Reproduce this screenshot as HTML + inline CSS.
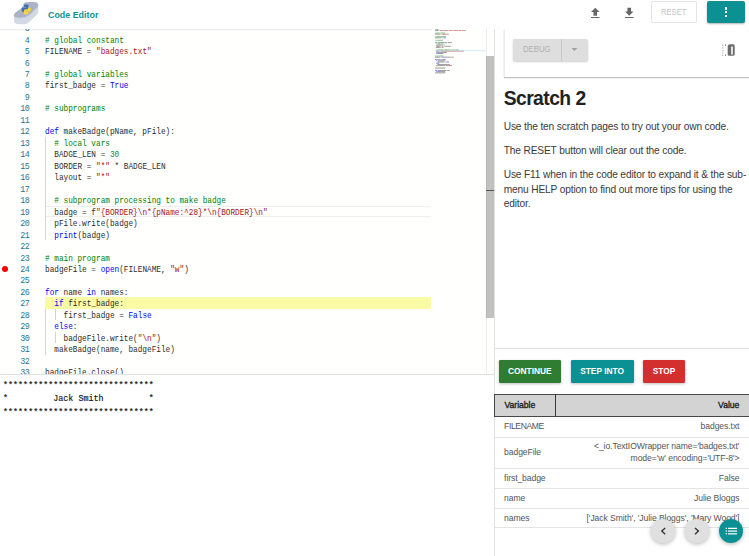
<!DOCTYPE html>
<html><head><meta charset="utf-8"><style>
*{margin:0;padding:0;box-sizing:border-box}
html,body{width:749px;height:556px;overflow:hidden;background:#fff;font-family:"Liberation Sans",sans-serif}
.abs{position:absolute}
#editor{position:absolute;left:0;top:0;width:494px;height:374px;background:#fffffe;overflow:hidden}
.ln{position:absolute;left:-0.6px;width:30px;text-align:right;font-family:"Liberation Mono",monospace;font-size:8.4px;line-height:11.47px;color:#237893;white-space:pre;letter-spacing:-0.4px;margin-top:2px}
.cl{position:absolute;left:45.4px;font-family:"Liberation Mono",monospace;font-size:8.4px;line-height:11.47px;white-space:pre;transform:scaleX(0.9226);transform-origin:0 0;margin-top:2px}
.ig{position:absolute;width:0.6px;background:#d3d3d3}
#header{position:absolute;left:0;top:0;width:749px;height:28.8px;background:#fff;z-index:5}
.btn{position:absolute;font-family:"Liberation Sans",sans-serif;font-weight:bold;color:#fff;text-align:center;border-radius:1.2px;box-shadow:0 1px 3px rgba(0,0,0,0.25)}
p.t{position:absolute;left:503.7px;white-space:nowrap;font-size:10.2px;letter-spacing:-0.15px;line-height:14.45px;color:#3a3a3a}
.hd{position:absolute;font-size:8.6px;font-weight:normal;color:#222;-webkit-text-stroke:0.35px #222;white-space:nowrap;line-height:10px}
.rl{position:absolute;left:494.6px;width:254.4px;height:0.7px;background:#e4e4e4}
.vt{position:absolute;left:504.1px;letter-spacing:-0.1px;font-size:8.6px;color:#555;white-space:nowrap;line-height:10px}
.vv{position:absolute;right:9.6px;letter-spacing:-0.08px;text-align:right;font-size:8.6px;color:#555;white-space:nowrap;line-height:10px}
.row{position:absolute;left:494px;width:255px;border-bottom:1px solid #e0e0e0;font-size:9.2px;color:#444}
.fab{position:absolute;border-radius:50%;box-shadow:0 1px 4px rgba(0,0,0,0.3)}
</style></head><body>
<div id="editor">
  <div class="abs" style="left:45px;top:297.41px;width:386px;height:11.47px;background:#fcfba5"></div>
  <div class="abs" style="left:45px;top:205.65px;width:386px;height:11.47px;border-top:1.2px solid #eeeeee;border-bottom:1.2px solid #eeeeee"></div>
  <div class="ig" style="left:45.40px;top:136.83px;height:103.23px"></div><div class="ig" style="left:45.40px;top:308.88px;height:45.88px"></div><div class="ig" style="left:54.70px;top:308.88px;height:11.47px"></div><div class="ig" style="left:54.70px;top:331.82px;height:11.47px"></div>
  <div class="ln" style="top:22.13px">3</div><div class="cl" style="top:22.13px"></div><div class="ln" style="top:33.60px">4</div><div class="cl" style="top:33.60px"><span style="color:#008000"># global constant</span></div><div class="ln" style="top:45.07px">5</div><div class="cl" style="top:45.07px"><span style="color:#2c2c2c">FILENAME = </span><span style="color:#a31515">&quot;badges.txt&quot;</span></div><div class="ln" style="top:56.54px">6</div><div class="cl" style="top:56.54px"></div><div class="ln" style="top:68.01px">7</div><div class="cl" style="top:68.01px"><span style="color:#008000"># global variables</span></div><div class="ln" style="top:79.48px">8</div><div class="cl" style="top:79.48px"><span style="color:#2c2c2c">first_badge = </span><span style="color:#0000ff">True</span></div><div class="ln" style="top:90.95px">9</div><div class="cl" style="top:90.95px"></div><div class="ln" style="top:102.42px">10</div><div class="cl" style="top:102.42px"><span style="color:#008000"># subprograms</span></div><div class="ln" style="top:113.89px">11</div><div class="cl" style="top:113.89px"></div><div class="ln" style="top:125.36px">12</div><div class="cl" style="top:125.36px"><span style="color:#0000ff">def</span><span style="color:#2c2c2c"> makeBadge(pName, pFile):</span></div><div class="ln" style="top:136.83px">13</div><div class="cl" style="top:136.83px"><span style="color:#008000">  # local vars</span></div><div class="ln" style="top:148.30px">14</div><div class="cl" style="top:148.30px"><span style="color:#2c2c2c">  BADGE_LEN = </span><span style="color:#098658">30</span></div><div class="ln" style="top:159.77px">15</div><div class="cl" style="top:159.77px"><span style="color:#2c2c2c">  BORDER = </span><span style="color:#a31515">&quot;*&quot;</span><span style="color:#2c2c2c"> * BADGE_LEN</span></div><div class="ln" style="top:171.24px">16</div><div class="cl" style="top:171.24px"><span style="color:#2c2c2c">  layout = </span><span style="color:#a31515">&quot;*&quot;</span></div><div class="ln" style="top:182.71px">17</div><div class="cl" style="top:182.71px"></div><div class="ln" style="top:194.18px">18</div><div class="cl" style="top:194.18px"><span style="color:#008000">  # subprogram processing to make badge</span></div><div class="ln" style="top:205.65px">19</div><div class="cl" style="top:205.65px"><span style="color:#2c2c2c">  badge = f</span><span style="color:#a31515">&quot;{BORDER}\n*{pName:^28}*\n{BORDER}\n&quot;</span></div><div class="ln" style="top:217.12px">20</div><div class="cl" style="top:217.12px"><span style="color:#2c2c2c">  pFile.write(badge)</span></div><div class="ln" style="top:228.59px">21</div><div class="cl" style="top:228.59px"><span style="color:#2c2c2c">  </span><span style="color:#0000ff">print</span><span style="color:#2c2c2c">(badge)</span></div><div class="ln" style="top:240.06px">22</div><div class="cl" style="top:240.06px"></div><div class="ln" style="top:251.53px">23</div><div class="cl" style="top:251.53px"><span style="color:#008000"># main program</span></div><div class="ln" style="top:263.00px">24</div><div class="cl" style="top:263.00px"><span style="color:#2c2c2c">badgeFile = </span><span style="color:#0000ff">open</span><span style="color:#2c2c2c">(FILENAME, </span><span style="color:#a31515">&quot;w&quot;</span><span style="color:#2c2c2c">)</span></div><div class="ln" style="top:274.47px">25</div><div class="cl" style="top:274.47px"></div><div class="ln" style="top:285.94px">26</div><div class="cl" style="top:285.94px"><span style="color:#0000ff">for</span><span style="color:#2c2c2c"> name </span><span style="color:#0000ff">in</span><span style="color:#2c2c2c"> names:</span></div><div class="ln" style="top:297.41px">27</div><div class="cl" style="top:297.41px"><span style="color:#2c2c2c">  </span><span style="color:#0000ff">if</span><span style="color:#2c2c2c"> first_badge:</span></div><div class="ln" style="top:308.88px">28</div><div class="cl" style="top:308.88px"><span style="color:#2c2c2c">    first_badge = </span><span style="color:#0000ff">False</span></div><div class="ln" style="top:320.35px">29</div><div class="cl" style="top:320.35px"><span style="color:#2c2c2c">  </span><span style="color:#0000ff">else</span><span style="color:#2c2c2c">:</span></div><div class="ln" style="top:331.82px">30</div><div class="cl" style="top:331.82px"><span style="color:#2c2c2c">    badgeFile.write(</span><span style="color:#a31515">&quot;\n&quot;</span><span style="color:#2c2c2c">)</span></div><div class="ln" style="top:343.29px">31</div><div class="cl" style="top:343.29px"><span style="color:#2c2c2c">  makeBadge(name, badgeFile)</span></div><div class="ln" style="top:354.76px">32</div><div class="cl" style="top:354.76px"></div><div class="ln" style="top:366.23px">33</div><div class="cl" style="top:366.23px"><span style="color:#2c2c2c">badgeFile.close()</span></div><div class="ln" style="top:377.70px">34</div><div class="cl" style="top:377.70px"></div>
  <div class="abs" style="left:2px;top:265.54px;width:6.4px;height:6.4px;border-radius:50%;background:#ff0000"></div>
  <svg class="abs" style="left:0;top:0" width="494" height="374"><rect x="435.00" y="28.95" width="0.60" height="0.85" fill="#008000" fill-opacity="0.6"/><rect x="436.21" y="28.95" width="0.60" height="0.85" fill="#008000" fill-opacity="0.6"/><rect x="436.81" y="28.95" width="0.60" height="0.85" fill="#008000" fill-opacity="0.6"/><rect x="437.42" y="28.95" width="0.60" height="0.85" fill="#008000" fill-opacity="0.6"/><rect x="438.02" y="28.95" width="0.60" height="0.85" fill="#008000" fill-opacity="0.6"/><rect x="435.00" y="30.16" width="0.60" height="0.85" fill="#2c2c2c" fill-opacity="0.6"/><rect x="435.60" y="30.16" width="0.60" height="0.85" fill="#2c2c2c" fill-opacity="0.6"/><rect x="436.21" y="30.16" width="0.60" height="0.85" fill="#2c2c2c" fill-opacity="0.6"/><rect x="436.81" y="30.16" width="0.60" height="0.85" fill="#2c2c2c" fill-opacity="0.6"/><rect x="437.42" y="30.16" width="0.60" height="0.85" fill="#2c2c2c" fill-opacity="0.6"/><rect x="438.62" y="30.16" width="0.60" height="0.85" fill="#2c2c2c" fill-opacity="0.6"/><rect x="439.83" y="30.16" width="0.60" height="0.85" fill="#a31515" fill-opacity="0.6"/><rect x="440.44" y="30.16" width="0.60" height="0.85" fill="#a31515" fill-opacity="0.6"/><rect x="441.04" y="30.16" width="0.60" height="0.85" fill="#a31515" fill-opacity="0.6"/><rect x="441.64" y="30.16" width="0.60" height="0.85" fill="#a31515" fill-opacity="0.6"/><rect x="442.25" y="30.16" width="0.60" height="0.85" fill="#a31515" fill-opacity="0.6"/><rect x="442.85" y="30.16" width="0.60" height="0.85" fill="#a31515" fill-opacity="0.6"/><rect x="444.06" y="30.16" width="0.60" height="0.85" fill="#a31515" fill-opacity="0.6"/><rect x="444.66" y="30.16" width="0.60" height="0.85" fill="#a31515" fill-opacity="0.6"/><rect x="445.27" y="30.16" width="0.60" height="0.85" fill="#a31515" fill-opacity="0.6"/><rect x="445.87" y="30.16" width="0.60" height="0.85" fill="#a31515" fill-opacity="0.6"/><rect x="446.48" y="30.16" width="0.60" height="0.85" fill="#a31515" fill-opacity="0.6"/><rect x="447.08" y="30.16" width="0.60" height="0.85" fill="#a31515" fill-opacity="0.6"/><rect x="447.68" y="30.16" width="0.60" height="0.85" fill="#a31515" fill-opacity="0.6"/><rect x="448.89" y="30.16" width="0.60" height="0.85" fill="#a31515" fill-opacity="0.6"/><rect x="449.50" y="30.16" width="0.60" height="0.85" fill="#a31515" fill-opacity="0.6"/><rect x="450.10" y="30.16" width="0.60" height="0.85" fill="#a31515" fill-opacity="0.6"/><rect x="450.70" y="30.16" width="0.60" height="0.85" fill="#a31515" fill-opacity="0.6"/><rect x="451.31" y="30.16" width="0.60" height="0.85" fill="#a31515" fill-opacity="0.6"/><rect x="451.91" y="30.16" width="0.60" height="0.85" fill="#a31515" fill-opacity="0.6"/><rect x="453.12" y="30.16" width="0.60" height="0.85" fill="#a31515" fill-opacity="0.6"/><rect x="453.72" y="30.16" width="0.60" height="0.85" fill="#a31515" fill-opacity="0.6"/><rect x="454.33" y="30.16" width="0.60" height="0.85" fill="#a31515" fill-opacity="0.6"/><rect x="454.93" y="30.16" width="0.60" height="0.85" fill="#a31515" fill-opacity="0.6"/><rect x="455.54" y="30.16" width="0.60" height="0.85" fill="#a31515" fill-opacity="0.6"/><rect x="456.14" y="30.16" width="0.60" height="0.85" fill="#a31515" fill-opacity="0.6"/><rect x="456.74" y="30.16" width="0.60" height="0.85" fill="#a31515" fill-opacity="0.6"/><rect x="457.35" y="30.16" width="0.60" height="0.85" fill="#a31515" fill-opacity="0.6"/><rect x="458.56" y="30.16" width="0.60" height="0.85" fill="#a31515" fill-opacity="0.6"/><rect x="459.16" y="30.16" width="0.60" height="0.85" fill="#a31515" fill-opacity="0.6"/><rect x="459.76" y="30.16" width="0.60" height="0.85" fill="#a31515" fill-opacity="0.6"/><rect x="460.37" y="30.16" width="0.60" height="0.85" fill="#a31515" fill-opacity="0.6"/><rect x="460.97" y="30.16" width="0.60" height="0.85" fill="#a31515" fill-opacity="0.6"/><rect x="462.18" y="30.16" width="0.60" height="0.85" fill="#a31515" fill-opacity="0.6"/><rect x="462.78" y="30.16" width="0.60" height="0.85" fill="#a31515" fill-opacity="0.6"/><rect x="463.39" y="30.16" width="0.60" height="0.85" fill="#a31515" fill-opacity="0.6"/><rect x="463.99" y="30.16" width="0.60" height="0.85" fill="#a31515" fill-opacity="0.6"/><rect x="464.60" y="30.16" width="0.60" height="0.85" fill="#a31515" fill-opacity="0.6"/><rect x="465.20" y="30.16" width="0.60" height="0.85" fill="#a31515" fill-opacity="0.6"/><rect x="435.00" y="32.57" width="0.60" height="0.85" fill="#008000" fill-opacity="0.6"/><rect x="436.21" y="32.57" width="0.60" height="0.85" fill="#008000" fill-opacity="0.6"/><rect x="436.81" y="32.57" width="0.60" height="0.85" fill="#008000" fill-opacity="0.6"/><rect x="437.42" y="32.57" width="0.60" height="0.85" fill="#008000" fill-opacity="0.6"/><rect x="438.02" y="32.57" width="0.60" height="0.85" fill="#008000" fill-opacity="0.6"/><rect x="438.62" y="32.57" width="0.60" height="0.85" fill="#008000" fill-opacity="0.6"/><rect x="439.23" y="32.57" width="0.60" height="0.85" fill="#008000" fill-opacity="0.6"/><rect x="440.44" y="32.57" width="0.60" height="0.85" fill="#008000" fill-opacity="0.6"/><rect x="441.04" y="32.57" width="0.60" height="0.85" fill="#008000" fill-opacity="0.6"/><rect x="441.64" y="32.57" width="0.60" height="0.85" fill="#008000" fill-opacity="0.6"/><rect x="442.25" y="32.57" width="0.60" height="0.85" fill="#008000" fill-opacity="0.6"/><rect x="442.85" y="32.57" width="0.60" height="0.85" fill="#008000" fill-opacity="0.6"/><rect x="443.46" y="32.57" width="0.60" height="0.85" fill="#008000" fill-opacity="0.6"/><rect x="444.06" y="32.57" width="0.60" height="0.85" fill="#008000" fill-opacity="0.6"/><rect x="444.66" y="32.57" width="0.60" height="0.85" fill="#008000" fill-opacity="0.6"/><rect x="435.00" y="33.78" width="0.60" height="0.85" fill="#2c2c2c" fill-opacity="0.6"/><rect x="435.60" y="33.78" width="0.60" height="0.85" fill="#2c2c2c" fill-opacity="0.6"/><rect x="436.21" y="33.78" width="0.60" height="0.85" fill="#2c2c2c" fill-opacity="0.6"/><rect x="436.81" y="33.78" width="0.60" height="0.85" fill="#2c2c2c" fill-opacity="0.6"/><rect x="437.42" y="33.78" width="0.60" height="0.85" fill="#2c2c2c" fill-opacity="0.6"/><rect x="438.02" y="33.78" width="0.60" height="0.85" fill="#2c2c2c" fill-opacity="0.6"/><rect x="438.62" y="33.78" width="0.60" height="0.85" fill="#2c2c2c" fill-opacity="0.6"/><rect x="439.23" y="33.78" width="0.60" height="0.85" fill="#2c2c2c" fill-opacity="0.6"/><rect x="440.44" y="33.78" width="0.60" height="0.85" fill="#2c2c2c" fill-opacity="0.6"/><rect x="441.64" y="33.78" width="0.60" height="0.85" fill="#a31515" fill-opacity="0.6"/><rect x="442.25" y="33.78" width="0.60" height="0.85" fill="#a31515" fill-opacity="0.6"/><rect x="442.85" y="33.78" width="0.60" height="0.85" fill="#a31515" fill-opacity="0.6"/><rect x="443.46" y="33.78" width="0.60" height="0.85" fill="#a31515" fill-opacity="0.6"/><rect x="444.06" y="33.78" width="0.60" height="0.85" fill="#a31515" fill-opacity="0.6"/><rect x="444.66" y="33.78" width="0.60" height="0.85" fill="#a31515" fill-opacity="0.6"/><rect x="445.27" y="33.78" width="0.60" height="0.85" fill="#a31515" fill-opacity="0.6"/><rect x="445.87" y="33.78" width="0.60" height="0.85" fill="#a31515" fill-opacity="0.6"/><rect x="446.48" y="33.78" width="0.60" height="0.85" fill="#a31515" fill-opacity="0.6"/><rect x="447.08" y="33.78" width="0.60" height="0.85" fill="#a31515" fill-opacity="0.6"/><rect x="447.68" y="33.78" width="0.60" height="0.85" fill="#a31515" fill-opacity="0.6"/><rect x="448.29" y="33.78" width="0.60" height="0.85" fill="#a31515" fill-opacity="0.6"/><rect x="435.00" y="36.20" width="0.60" height="0.85" fill="#008000" fill-opacity="0.6"/><rect x="436.21" y="36.20" width="0.60" height="0.85" fill="#008000" fill-opacity="0.6"/><rect x="436.81" y="36.20" width="0.60" height="0.85" fill="#008000" fill-opacity="0.6"/><rect x="437.42" y="36.20" width="0.60" height="0.85" fill="#008000" fill-opacity="0.6"/><rect x="438.02" y="36.20" width="0.60" height="0.85" fill="#008000" fill-opacity="0.6"/><rect x="438.62" y="36.20" width="0.60" height="0.85" fill="#008000" fill-opacity="0.6"/><rect x="439.23" y="36.20" width="0.60" height="0.85" fill="#008000" fill-opacity="0.6"/><rect x="440.44" y="36.20" width="0.60" height="0.85" fill="#008000" fill-opacity="0.6"/><rect x="441.04" y="36.20" width="0.60" height="0.85" fill="#008000" fill-opacity="0.6"/><rect x="441.64" y="36.20" width="0.60" height="0.85" fill="#008000" fill-opacity="0.6"/><rect x="442.25" y="36.20" width="0.60" height="0.85" fill="#008000" fill-opacity="0.6"/><rect x="442.85" y="36.20" width="0.60" height="0.85" fill="#008000" fill-opacity="0.6"/><rect x="443.46" y="36.20" width="0.60" height="0.85" fill="#008000" fill-opacity="0.6"/><rect x="444.06" y="36.20" width="0.60" height="0.85" fill="#008000" fill-opacity="0.6"/><rect x="444.66" y="36.20" width="0.60" height="0.85" fill="#008000" fill-opacity="0.6"/><rect x="445.27" y="36.20" width="0.60" height="0.85" fill="#008000" fill-opacity="0.6"/><rect x="435.00" y="37.41" width="0.60" height="0.85" fill="#2c2c2c" fill-opacity="0.6"/><rect x="435.60" y="37.41" width="0.60" height="0.85" fill="#2c2c2c" fill-opacity="0.6"/><rect x="436.21" y="37.41" width="0.60" height="0.85" fill="#2c2c2c" fill-opacity="0.6"/><rect x="436.81" y="37.41" width="0.60" height="0.85" fill="#2c2c2c" fill-opacity="0.6"/><rect x="437.42" y="37.41" width="0.60" height="0.85" fill="#2c2c2c" fill-opacity="0.6"/><rect x="438.02" y="37.41" width="0.60" height="0.85" fill="#2c2c2c" fill-opacity="0.6"/><rect x="438.62" y="37.41" width="0.60" height="0.85" fill="#2c2c2c" fill-opacity="0.6"/><rect x="439.23" y="37.41" width="0.60" height="0.85" fill="#2c2c2c" fill-opacity="0.6"/><rect x="439.83" y="37.41" width="0.60" height="0.85" fill="#2c2c2c" fill-opacity="0.6"/><rect x="440.44" y="37.41" width="0.60" height="0.85" fill="#2c2c2c" fill-opacity="0.6"/><rect x="441.04" y="37.41" width="0.60" height="0.85" fill="#2c2c2c" fill-opacity="0.6"/><rect x="442.25" y="37.41" width="0.60" height="0.85" fill="#2c2c2c" fill-opacity="0.6"/><rect x="443.46" y="37.41" width="0.60" height="0.85" fill="#0000ff" fill-opacity="0.6"/><rect x="444.06" y="37.41" width="0.60" height="0.85" fill="#0000ff" fill-opacity="0.6"/><rect x="444.66" y="37.41" width="0.60" height="0.85" fill="#0000ff" fill-opacity="0.6"/><rect x="445.27" y="37.41" width="0.60" height="0.85" fill="#0000ff" fill-opacity="0.6"/><rect x="435.00" y="39.82" width="0.60" height="0.85" fill="#008000" fill-opacity="0.6"/><rect x="436.21" y="39.82" width="0.60" height="0.85" fill="#008000" fill-opacity="0.6"/><rect x="436.81" y="39.82" width="0.60" height="0.85" fill="#008000" fill-opacity="0.6"/><rect x="437.42" y="39.82" width="0.60" height="0.85" fill="#008000" fill-opacity="0.6"/><rect x="438.02" y="39.82" width="0.60" height="0.85" fill="#008000" fill-opacity="0.6"/><rect x="438.62" y="39.82" width="0.60" height="0.85" fill="#008000" fill-opacity="0.6"/><rect x="439.23" y="39.82" width="0.60" height="0.85" fill="#008000" fill-opacity="0.6"/><rect x="439.83" y="39.82" width="0.60" height="0.85" fill="#008000" fill-opacity="0.6"/><rect x="440.44" y="39.82" width="0.60" height="0.85" fill="#008000" fill-opacity="0.6"/><rect x="441.04" y="39.82" width="0.60" height="0.85" fill="#008000" fill-opacity="0.6"/><rect x="441.64" y="39.82" width="0.60" height="0.85" fill="#008000" fill-opacity="0.6"/><rect x="442.25" y="39.82" width="0.60" height="0.85" fill="#008000" fill-opacity="0.6"/><rect x="435.00" y="42.24" width="0.60" height="0.85" fill="#0000ff" fill-opacity="0.6"/><rect x="435.60" y="42.24" width="0.60" height="0.85" fill="#0000ff" fill-opacity="0.6"/><rect x="436.21" y="42.24" width="0.60" height="0.85" fill="#0000ff" fill-opacity="0.6"/><rect x="437.42" y="42.24" width="0.60" height="0.85" fill="#2c2c2c" fill-opacity="0.6"/><rect x="438.02" y="42.24" width="0.60" height="0.85" fill="#2c2c2c" fill-opacity="0.6"/><rect x="438.62" y="42.24" width="0.60" height="0.85" fill="#2c2c2c" fill-opacity="0.6"/><rect x="439.23" y="42.24" width="0.60" height="0.85" fill="#2c2c2c" fill-opacity="0.6"/><rect x="439.83" y="42.24" width="0.60" height="0.85" fill="#2c2c2c" fill-opacity="0.6"/><rect x="440.44" y="42.24" width="0.60" height="0.85" fill="#2c2c2c" fill-opacity="0.6"/><rect x="441.04" y="42.24" width="0.60" height="0.85" fill="#2c2c2c" fill-opacity="0.6"/><rect x="441.64" y="42.24" width="0.60" height="0.85" fill="#2c2c2c" fill-opacity="0.6"/><rect x="442.25" y="42.24" width="0.60" height="0.85" fill="#2c2c2c" fill-opacity="0.6"/><rect x="442.85" y="42.24" width="0.60" height="0.85" fill="#2c2c2c" fill-opacity="0.6"/><rect x="443.46" y="42.24" width="0.60" height="0.85" fill="#2c2c2c" fill-opacity="0.6"/><rect x="444.06" y="42.24" width="0.60" height="0.85" fill="#2c2c2c" fill-opacity="0.6"/><rect x="444.66" y="42.24" width="0.60" height="0.85" fill="#2c2c2c" fill-opacity="0.6"/><rect x="445.27" y="42.24" width="0.60" height="0.85" fill="#2c2c2c" fill-opacity="0.6"/><rect x="445.87" y="42.24" width="0.60" height="0.85" fill="#2c2c2c" fill-opacity="0.6"/><rect x="446.48" y="42.24" width="0.60" height="0.85" fill="#2c2c2c" fill-opacity="0.6"/><rect x="447.68" y="42.24" width="0.60" height="0.85" fill="#2c2c2c" fill-opacity="0.6"/><rect x="448.29" y="42.24" width="0.60" height="0.85" fill="#2c2c2c" fill-opacity="0.6"/><rect x="448.89" y="42.24" width="0.60" height="0.85" fill="#2c2c2c" fill-opacity="0.6"/><rect x="449.50" y="42.24" width="0.60" height="0.85" fill="#2c2c2c" fill-opacity="0.6"/><rect x="450.10" y="42.24" width="0.60" height="0.85" fill="#2c2c2c" fill-opacity="0.6"/><rect x="450.70" y="42.24" width="0.60" height="0.85" fill="#2c2c2c" fill-opacity="0.6"/><rect x="451.31" y="42.24" width="0.60" height="0.85" fill="#2c2c2c" fill-opacity="0.6"/><rect x="436.21" y="43.45" width="0.60" height="0.85" fill="#008000" fill-opacity="0.6"/><rect x="437.42" y="43.45" width="0.60" height="0.85" fill="#008000" fill-opacity="0.6"/><rect x="438.02" y="43.45" width="0.60" height="0.85" fill="#008000" fill-opacity="0.6"/><rect x="438.62" y="43.45" width="0.60" height="0.85" fill="#008000" fill-opacity="0.6"/><rect x="439.23" y="43.45" width="0.60" height="0.85" fill="#008000" fill-opacity="0.6"/><rect x="439.83" y="43.45" width="0.60" height="0.85" fill="#008000" fill-opacity="0.6"/><rect x="441.04" y="43.45" width="0.60" height="0.85" fill="#008000" fill-opacity="0.6"/><rect x="441.64" y="43.45" width="0.60" height="0.85" fill="#008000" fill-opacity="0.6"/><rect x="442.25" y="43.45" width="0.60" height="0.85" fill="#008000" fill-opacity="0.6"/><rect x="442.85" y="43.45" width="0.60" height="0.85" fill="#008000" fill-opacity="0.6"/><rect x="436.21" y="44.65" width="0.60" height="0.85" fill="#2c2c2c" fill-opacity="0.6"/><rect x="436.81" y="44.65" width="0.60" height="0.85" fill="#2c2c2c" fill-opacity="0.6"/><rect x="437.42" y="44.65" width="0.60" height="0.85" fill="#2c2c2c" fill-opacity="0.6"/><rect x="438.02" y="44.65" width="0.60" height="0.85" fill="#2c2c2c" fill-opacity="0.6"/><rect x="438.62" y="44.65" width="0.60" height="0.85" fill="#2c2c2c" fill-opacity="0.6"/><rect x="439.23" y="44.65" width="0.60" height="0.85" fill="#2c2c2c" fill-opacity="0.6"/><rect x="439.83" y="44.65" width="0.60" height="0.85" fill="#2c2c2c" fill-opacity="0.6"/><rect x="440.44" y="44.65" width="0.60" height="0.85" fill="#2c2c2c" fill-opacity="0.6"/><rect x="441.04" y="44.65" width="0.60" height="0.85" fill="#2c2c2c" fill-opacity="0.6"/><rect x="442.25" y="44.65" width="0.60" height="0.85" fill="#2c2c2c" fill-opacity="0.6"/><rect x="443.46" y="44.65" width="0.60" height="0.85" fill="#098658" fill-opacity="0.6"/><rect x="444.06" y="44.65" width="0.60" height="0.85" fill="#098658" fill-opacity="0.6"/><rect x="436.21" y="45.86" width="0.60" height="0.85" fill="#2c2c2c" fill-opacity="0.6"/><rect x="436.81" y="45.86" width="0.60" height="0.85" fill="#2c2c2c" fill-opacity="0.6"/><rect x="437.42" y="45.86" width="0.60" height="0.85" fill="#2c2c2c" fill-opacity="0.6"/><rect x="438.02" y="45.86" width="0.60" height="0.85" fill="#2c2c2c" fill-opacity="0.6"/><rect x="438.62" y="45.86" width="0.60" height="0.85" fill="#2c2c2c" fill-opacity="0.6"/><rect x="439.23" y="45.86" width="0.60" height="0.85" fill="#2c2c2c" fill-opacity="0.6"/><rect x="440.44" y="45.86" width="0.60" height="0.85" fill="#2c2c2c" fill-opacity="0.6"/><rect x="441.64" y="45.86" width="0.60" height="0.85" fill="#a31515" fill-opacity="0.6"/><rect x="442.25" y="45.86" width="0.60" height="0.85" fill="#a31515" fill-opacity="0.6"/><rect x="442.85" y="45.86" width="0.60" height="0.85" fill="#a31515" fill-opacity="0.6"/><rect x="444.06" y="45.86" width="0.60" height="0.85" fill="#2c2c2c" fill-opacity="0.6"/><rect x="445.27" y="45.86" width="0.60" height="0.85" fill="#2c2c2c" fill-opacity="0.6"/><rect x="445.87" y="45.86" width="0.60" height="0.85" fill="#2c2c2c" fill-opacity="0.6"/><rect x="446.48" y="45.86" width="0.60" height="0.85" fill="#2c2c2c" fill-opacity="0.6"/><rect x="447.08" y="45.86" width="0.60" height="0.85" fill="#2c2c2c" fill-opacity="0.6"/><rect x="447.68" y="45.86" width="0.60" height="0.85" fill="#2c2c2c" fill-opacity="0.6"/><rect x="448.29" y="45.86" width="0.60" height="0.85" fill="#2c2c2c" fill-opacity="0.6"/><rect x="448.89" y="45.86" width="0.60" height="0.85" fill="#2c2c2c" fill-opacity="0.6"/><rect x="449.50" y="45.86" width="0.60" height="0.85" fill="#2c2c2c" fill-opacity="0.6"/><rect x="450.10" y="45.86" width="0.60" height="0.85" fill="#2c2c2c" fill-opacity="0.6"/><rect x="436.21" y="47.07" width="0.60" height="0.85" fill="#2c2c2c" fill-opacity="0.6"/><rect x="436.81" y="47.07" width="0.60" height="0.85" fill="#2c2c2c" fill-opacity="0.6"/><rect x="437.42" y="47.07" width="0.60" height="0.85" fill="#2c2c2c" fill-opacity="0.6"/><rect x="438.02" y="47.07" width="0.60" height="0.85" fill="#2c2c2c" fill-opacity="0.6"/><rect x="438.62" y="47.07" width="0.60" height="0.85" fill="#2c2c2c" fill-opacity="0.6"/><rect x="439.23" y="47.07" width="0.60" height="0.85" fill="#2c2c2c" fill-opacity="0.6"/><rect x="440.44" y="47.07" width="0.60" height="0.85" fill="#2c2c2c" fill-opacity="0.6"/><rect x="441.64" y="47.07" width="0.60" height="0.85" fill="#a31515" fill-opacity="0.6"/><rect x="442.25" y="47.07" width="0.60" height="0.85" fill="#a31515" fill-opacity="0.6"/><rect x="442.85" y="47.07" width="0.60" height="0.85" fill="#a31515" fill-opacity="0.6"/><rect x="436.21" y="49.49" width="0.60" height="0.85" fill="#008000" fill-opacity="0.6"/><rect x="437.42" y="49.49" width="0.60" height="0.85" fill="#008000" fill-opacity="0.6"/><rect x="438.02" y="49.49" width="0.60" height="0.85" fill="#008000" fill-opacity="0.6"/><rect x="438.62" y="49.49" width="0.60" height="0.85" fill="#008000" fill-opacity="0.6"/><rect x="439.23" y="49.49" width="0.60" height="0.85" fill="#008000" fill-opacity="0.6"/><rect x="439.83" y="49.49" width="0.60" height="0.85" fill="#008000" fill-opacity="0.6"/><rect x="440.44" y="49.49" width="0.60" height="0.85" fill="#008000" fill-opacity="0.6"/><rect x="441.04" y="49.49" width="0.60" height="0.85" fill="#008000" fill-opacity="0.6"/><rect x="441.64" y="49.49" width="0.60" height="0.85" fill="#008000" fill-opacity="0.6"/><rect x="442.25" y="49.49" width="0.60" height="0.85" fill="#008000" fill-opacity="0.6"/><rect x="442.85" y="49.49" width="0.60" height="0.85" fill="#008000" fill-opacity="0.6"/><rect x="444.06" y="49.49" width="0.60" height="0.85" fill="#008000" fill-opacity="0.6"/><rect x="444.66" y="49.49" width="0.60" height="0.85" fill="#008000" fill-opacity="0.6"/><rect x="445.27" y="49.49" width="0.60" height="0.85" fill="#008000" fill-opacity="0.6"/><rect x="445.87" y="49.49" width="0.60" height="0.85" fill="#008000" fill-opacity="0.6"/><rect x="446.48" y="49.49" width="0.60" height="0.85" fill="#008000" fill-opacity="0.6"/><rect x="447.08" y="49.49" width="0.60" height="0.85" fill="#008000" fill-opacity="0.6"/><rect x="447.68" y="49.49" width="0.60" height="0.85" fill="#008000" fill-opacity="0.6"/><rect x="448.29" y="49.49" width="0.60" height="0.85" fill="#008000" fill-opacity="0.6"/><rect x="448.89" y="49.49" width="0.60" height="0.85" fill="#008000" fill-opacity="0.6"/><rect x="449.50" y="49.49" width="0.60" height="0.85" fill="#008000" fill-opacity="0.6"/><rect x="450.70" y="49.49" width="0.60" height="0.85" fill="#008000" fill-opacity="0.6"/><rect x="451.31" y="49.49" width="0.60" height="0.85" fill="#008000" fill-opacity="0.6"/><rect x="452.52" y="49.49" width="0.60" height="0.85" fill="#008000" fill-opacity="0.6"/><rect x="453.12" y="49.49" width="0.60" height="0.85" fill="#008000" fill-opacity="0.6"/><rect x="453.72" y="49.49" width="0.60" height="0.85" fill="#008000" fill-opacity="0.6"/><rect x="454.33" y="49.49" width="0.60" height="0.85" fill="#008000" fill-opacity="0.6"/><rect x="455.54" y="49.49" width="0.60" height="0.85" fill="#008000" fill-opacity="0.6"/><rect x="456.14" y="49.49" width="0.60" height="0.85" fill="#008000" fill-opacity="0.6"/><rect x="456.74" y="49.49" width="0.60" height="0.85" fill="#008000" fill-opacity="0.6"/><rect x="457.35" y="49.49" width="0.60" height="0.85" fill="#008000" fill-opacity="0.6"/><rect x="457.95" y="49.49" width="0.60" height="0.85" fill="#008000" fill-opacity="0.6"/><rect x="436.21" y="50.69" width="0.60" height="0.85" fill="#2c2c2c" fill-opacity="0.6"/><rect x="436.81" y="50.69" width="0.60" height="0.85" fill="#2c2c2c" fill-opacity="0.6"/><rect x="437.42" y="50.69" width="0.60" height="0.85" fill="#2c2c2c" fill-opacity="0.6"/><rect x="438.02" y="50.69" width="0.60" height="0.85" fill="#2c2c2c" fill-opacity="0.6"/><rect x="438.62" y="50.69" width="0.60" height="0.85" fill="#2c2c2c" fill-opacity="0.6"/><rect x="439.83" y="50.69" width="0.60" height="0.85" fill="#2c2c2c" fill-opacity="0.6"/><rect x="441.04" y="50.69" width="0.60" height="0.85" fill="#2c2c2c" fill-opacity="0.6"/><rect x="441.64" y="50.69" width="0.60" height="0.85" fill="#a31515" fill-opacity="0.6"/><rect x="442.25" y="50.69" width="0.60" height="0.85" fill="#a31515" fill-opacity="0.6"/><rect x="442.85" y="50.69" width="0.60" height="0.85" fill="#a31515" fill-opacity="0.6"/><rect x="443.46" y="50.69" width="0.60" height="0.85" fill="#a31515" fill-opacity="0.6"/><rect x="444.06" y="50.69" width="0.60" height="0.85" fill="#a31515" fill-opacity="0.6"/><rect x="444.66" y="50.69" width="0.60" height="0.85" fill="#a31515" fill-opacity="0.6"/><rect x="445.27" y="50.69" width="0.60" height="0.85" fill="#a31515" fill-opacity="0.6"/><rect x="445.87" y="50.69" width="0.60" height="0.85" fill="#a31515" fill-opacity="0.6"/><rect x="446.48" y="50.69" width="0.60" height="0.85" fill="#a31515" fill-opacity="0.6"/><rect x="447.08" y="50.69" width="0.60" height="0.85" fill="#a31515" fill-opacity="0.6"/><rect x="447.68" y="50.69" width="0.60" height="0.85" fill="#a31515" fill-opacity="0.6"/><rect x="448.29" y="50.69" width="0.60" height="0.85" fill="#a31515" fill-opacity="0.6"/><rect x="448.89" y="50.69" width="0.60" height="0.85" fill="#a31515" fill-opacity="0.6"/><rect x="449.50" y="50.69" width="0.60" height="0.85" fill="#a31515" fill-opacity="0.6"/><rect x="450.10" y="50.69" width="0.60" height="0.85" fill="#a31515" fill-opacity="0.6"/><rect x="450.70" y="50.69" width="0.60" height="0.85" fill="#a31515" fill-opacity="0.6"/><rect x="451.31" y="50.69" width="0.60" height="0.85" fill="#a31515" fill-opacity="0.6"/><rect x="451.91" y="50.69" width="0.60" height="0.85" fill="#a31515" fill-opacity="0.6"/><rect x="452.52" y="50.69" width="0.60" height="0.85" fill="#a31515" fill-opacity="0.6"/><rect x="453.12" y="50.69" width="0.60" height="0.85" fill="#a31515" fill-opacity="0.6"/><rect x="453.72" y="50.69" width="0.60" height="0.85" fill="#a31515" fill-opacity="0.6"/><rect x="454.33" y="50.69" width="0.60" height="0.85" fill="#a31515" fill-opacity="0.6"/><rect x="454.93" y="50.69" width="0.60" height="0.85" fill="#a31515" fill-opacity="0.6"/><rect x="455.54" y="50.69" width="0.60" height="0.85" fill="#a31515" fill-opacity="0.6"/><rect x="456.14" y="50.69" width="0.60" height="0.85" fill="#a31515" fill-opacity="0.6"/><rect x="456.74" y="50.69" width="0.60" height="0.85" fill="#a31515" fill-opacity="0.6"/><rect x="457.35" y="50.69" width="0.60" height="0.85" fill="#a31515" fill-opacity="0.6"/><rect x="457.95" y="50.69" width="0.60" height="0.85" fill="#a31515" fill-opacity="0.6"/><rect x="458.56" y="50.69" width="0.60" height="0.85" fill="#a31515" fill-opacity="0.6"/><rect x="459.16" y="50.69" width="0.60" height="0.85" fill="#a31515" fill-opacity="0.6"/><rect x="459.76" y="50.69" width="0.60" height="0.85" fill="#a31515" fill-opacity="0.6"/><rect x="460.37" y="50.69" width="0.60" height="0.85" fill="#a31515" fill-opacity="0.6"/><rect x="460.97" y="50.69" width="0.60" height="0.85" fill="#a31515" fill-opacity="0.6"/><rect x="461.58" y="50.69" width="0.60" height="0.85" fill="#a31515" fill-opacity="0.6"/><rect x="462.18" y="50.69" width="0.60" height="0.85" fill="#a31515" fill-opacity="0.6"/><rect x="462.78" y="50.69" width="0.60" height="0.85" fill="#a31515" fill-opacity="0.6"/><rect x="463.39" y="50.69" width="0.60" height="0.85" fill="#a31515" fill-opacity="0.6"/><rect x="436.21" y="51.90" width="0.60" height="0.85" fill="#2c2c2c" fill-opacity="0.6"/><rect x="436.81" y="51.90" width="0.60" height="0.85" fill="#2c2c2c" fill-opacity="0.6"/><rect x="437.42" y="51.90" width="0.60" height="0.85" fill="#2c2c2c" fill-opacity="0.6"/><rect x="438.02" y="51.90" width="0.60" height="0.85" fill="#2c2c2c" fill-opacity="0.6"/><rect x="438.62" y="51.90" width="0.60" height="0.85" fill="#2c2c2c" fill-opacity="0.6"/><rect x="439.23" y="51.90" width="0.60" height="0.85" fill="#2c2c2c" fill-opacity="0.6"/><rect x="439.83" y="51.90" width="0.60" height="0.85" fill="#2c2c2c" fill-opacity="0.6"/><rect x="440.44" y="51.90" width="0.60" height="0.85" fill="#2c2c2c" fill-opacity="0.6"/><rect x="441.04" y="51.90" width="0.60" height="0.85" fill="#2c2c2c" fill-opacity="0.6"/><rect x="441.64" y="51.90" width="0.60" height="0.85" fill="#2c2c2c" fill-opacity="0.6"/><rect x="442.25" y="51.90" width="0.60" height="0.85" fill="#2c2c2c" fill-opacity="0.6"/><rect x="442.85" y="51.90" width="0.60" height="0.85" fill="#2c2c2c" fill-opacity="0.6"/><rect x="443.46" y="51.90" width="0.60" height="0.85" fill="#2c2c2c" fill-opacity="0.6"/><rect x="444.06" y="51.90" width="0.60" height="0.85" fill="#2c2c2c" fill-opacity="0.6"/><rect x="444.66" y="51.90" width="0.60" height="0.85" fill="#2c2c2c" fill-opacity="0.6"/><rect x="445.27" y="51.90" width="0.60" height="0.85" fill="#2c2c2c" fill-opacity="0.6"/><rect x="445.87" y="51.90" width="0.60" height="0.85" fill="#2c2c2c" fill-opacity="0.6"/><rect x="446.48" y="51.90" width="0.60" height="0.85" fill="#2c2c2c" fill-opacity="0.6"/><rect x="436.21" y="53.11" width="0.60" height="0.85" fill="#0000ff" fill-opacity="0.6"/><rect x="436.81" y="53.11" width="0.60" height="0.85" fill="#0000ff" fill-opacity="0.6"/><rect x="437.42" y="53.11" width="0.60" height="0.85" fill="#0000ff" fill-opacity="0.6"/><rect x="438.02" y="53.11" width="0.60" height="0.85" fill="#0000ff" fill-opacity="0.6"/><rect x="438.62" y="53.11" width="0.60" height="0.85" fill="#0000ff" fill-opacity="0.6"/><rect x="439.23" y="53.11" width="0.60" height="0.85" fill="#2c2c2c" fill-opacity="0.6"/><rect x="439.83" y="53.11" width="0.60" height="0.85" fill="#2c2c2c" fill-opacity="0.6"/><rect x="440.44" y="53.11" width="0.60" height="0.85" fill="#2c2c2c" fill-opacity="0.6"/><rect x="441.04" y="53.11" width="0.60" height="0.85" fill="#2c2c2c" fill-opacity="0.6"/><rect x="441.64" y="53.11" width="0.60" height="0.85" fill="#2c2c2c" fill-opacity="0.6"/><rect x="442.25" y="53.11" width="0.60" height="0.85" fill="#2c2c2c" fill-opacity="0.6"/><rect x="442.85" y="53.11" width="0.60" height="0.85" fill="#2c2c2c" fill-opacity="0.6"/><rect x="435.00" y="55.53" width="0.60" height="0.85" fill="#008000" fill-opacity="0.6"/><rect x="436.21" y="55.53" width="0.60" height="0.85" fill="#008000" fill-opacity="0.6"/><rect x="436.81" y="55.53" width="0.60" height="0.85" fill="#008000" fill-opacity="0.6"/><rect x="437.42" y="55.53" width="0.60" height="0.85" fill="#008000" fill-opacity="0.6"/><rect x="438.02" y="55.53" width="0.60" height="0.85" fill="#008000" fill-opacity="0.6"/><rect x="439.23" y="55.53" width="0.60" height="0.85" fill="#008000" fill-opacity="0.6"/><rect x="439.83" y="55.53" width="0.60" height="0.85" fill="#008000" fill-opacity="0.6"/><rect x="440.44" y="55.53" width="0.60" height="0.85" fill="#008000" fill-opacity="0.6"/><rect x="441.04" y="55.53" width="0.60" height="0.85" fill="#008000" fill-opacity="0.6"/><rect x="441.64" y="55.53" width="0.60" height="0.85" fill="#008000" fill-opacity="0.6"/><rect x="442.25" y="55.53" width="0.60" height="0.85" fill="#008000" fill-opacity="0.6"/><rect x="442.85" y="55.53" width="0.60" height="0.85" fill="#008000" fill-opacity="0.6"/><rect x="435.00" y="56.73" width="0.60" height="0.85" fill="#2c2c2c" fill-opacity="0.6"/><rect x="435.60" y="56.73" width="0.60" height="0.85" fill="#2c2c2c" fill-opacity="0.6"/><rect x="436.21" y="56.73" width="0.60" height="0.85" fill="#2c2c2c" fill-opacity="0.6"/><rect x="436.81" y="56.73" width="0.60" height="0.85" fill="#2c2c2c" fill-opacity="0.6"/><rect x="437.42" y="56.73" width="0.60" height="0.85" fill="#2c2c2c" fill-opacity="0.6"/><rect x="438.02" y="56.73" width="0.60" height="0.85" fill="#2c2c2c" fill-opacity="0.6"/><rect x="438.62" y="56.73" width="0.60" height="0.85" fill="#2c2c2c" fill-opacity="0.6"/><rect x="439.23" y="56.73" width="0.60" height="0.85" fill="#2c2c2c" fill-opacity="0.6"/><rect x="439.83" y="56.73" width="0.60" height="0.85" fill="#2c2c2c" fill-opacity="0.6"/><rect x="441.04" y="56.73" width="0.60" height="0.85" fill="#2c2c2c" fill-opacity="0.6"/><rect x="442.25" y="56.73" width="0.60" height="0.85" fill="#0000ff" fill-opacity="0.6"/><rect x="442.85" y="56.73" width="0.60" height="0.85" fill="#0000ff" fill-opacity="0.6"/><rect x="443.46" y="56.73" width="0.60" height="0.85" fill="#0000ff" fill-opacity="0.6"/><rect x="444.06" y="56.73" width="0.60" height="0.85" fill="#0000ff" fill-opacity="0.6"/><rect x="444.66" y="56.73" width="0.60" height="0.85" fill="#2c2c2c" fill-opacity="0.6"/><rect x="445.27" y="56.73" width="0.60" height="0.85" fill="#2c2c2c" fill-opacity="0.6"/><rect x="445.87" y="56.73" width="0.60" height="0.85" fill="#2c2c2c" fill-opacity="0.6"/><rect x="446.48" y="56.73" width="0.60" height="0.85" fill="#2c2c2c" fill-opacity="0.6"/><rect x="447.08" y="56.73" width="0.60" height="0.85" fill="#2c2c2c" fill-opacity="0.6"/><rect x="447.68" y="56.73" width="0.60" height="0.85" fill="#2c2c2c" fill-opacity="0.6"/><rect x="448.29" y="56.73" width="0.60" height="0.85" fill="#2c2c2c" fill-opacity="0.6"/><rect x="448.89" y="56.73" width="0.60" height="0.85" fill="#2c2c2c" fill-opacity="0.6"/><rect x="449.50" y="56.73" width="0.60" height="0.85" fill="#2c2c2c" fill-opacity="0.6"/><rect x="450.10" y="56.73" width="0.60" height="0.85" fill="#2c2c2c" fill-opacity="0.6"/><rect x="451.31" y="56.73" width="0.60" height="0.85" fill="#a31515" fill-opacity="0.6"/><rect x="451.91" y="56.73" width="0.60" height="0.85" fill="#a31515" fill-opacity="0.6"/><rect x="452.52" y="56.73" width="0.60" height="0.85" fill="#a31515" fill-opacity="0.6"/><rect x="453.12" y="56.73" width="0.60" height="0.85" fill="#2c2c2c" fill-opacity="0.6"/><rect x="435.00" y="59.15" width="0.60" height="0.85" fill="#0000ff" fill-opacity="0.6"/><rect x="435.60" y="59.15" width="0.60" height="0.85" fill="#0000ff" fill-opacity="0.6"/><rect x="436.21" y="59.15" width="0.60" height="0.85" fill="#0000ff" fill-opacity="0.6"/><rect x="437.42" y="59.15" width="0.60" height="0.85" fill="#2c2c2c" fill-opacity="0.6"/><rect x="438.02" y="59.15" width="0.60" height="0.85" fill="#2c2c2c" fill-opacity="0.6"/><rect x="438.62" y="59.15" width="0.60" height="0.85" fill="#2c2c2c" fill-opacity="0.6"/><rect x="439.23" y="59.15" width="0.60" height="0.85" fill="#2c2c2c" fill-opacity="0.6"/><rect x="440.44" y="59.15" width="0.60" height="0.85" fill="#0000ff" fill-opacity="0.6"/><rect x="441.04" y="59.15" width="0.60" height="0.85" fill="#0000ff" fill-opacity="0.6"/><rect x="442.25" y="59.15" width="0.60" height="0.85" fill="#2c2c2c" fill-opacity="0.6"/><rect x="442.85" y="59.15" width="0.60" height="0.85" fill="#2c2c2c" fill-opacity="0.6"/><rect x="443.46" y="59.15" width="0.60" height="0.85" fill="#2c2c2c" fill-opacity="0.6"/><rect x="444.06" y="59.15" width="0.60" height="0.85" fill="#2c2c2c" fill-opacity="0.6"/><rect x="444.66" y="59.15" width="0.60" height="0.85" fill="#2c2c2c" fill-opacity="0.6"/><rect x="445.27" y="59.15" width="0.60" height="0.85" fill="#2c2c2c" fill-opacity="0.6"/><rect x="436.21" y="60.36" width="0.60" height="0.85" fill="#0000ff" fill-opacity="0.6"/><rect x="436.81" y="60.36" width="0.60" height="0.85" fill="#0000ff" fill-opacity="0.6"/><rect x="438.02" y="60.36" width="0.60" height="0.85" fill="#2c2c2c" fill-opacity="0.6"/><rect x="438.62" y="60.36" width="0.60" height="0.85" fill="#2c2c2c" fill-opacity="0.6"/><rect x="439.23" y="60.36" width="0.60" height="0.85" fill="#2c2c2c" fill-opacity="0.6"/><rect x="439.83" y="60.36" width="0.60" height="0.85" fill="#2c2c2c" fill-opacity="0.6"/><rect x="440.44" y="60.36" width="0.60" height="0.85" fill="#2c2c2c" fill-opacity="0.6"/><rect x="441.04" y="60.36" width="0.60" height="0.85" fill="#2c2c2c" fill-opacity="0.6"/><rect x="441.64" y="60.36" width="0.60" height="0.85" fill="#2c2c2c" fill-opacity="0.6"/><rect x="442.25" y="60.36" width="0.60" height="0.85" fill="#2c2c2c" fill-opacity="0.6"/><rect x="442.85" y="60.36" width="0.60" height="0.85" fill="#2c2c2c" fill-opacity="0.6"/><rect x="443.46" y="60.36" width="0.60" height="0.85" fill="#2c2c2c" fill-opacity="0.6"/><rect x="444.06" y="60.36" width="0.60" height="0.85" fill="#2c2c2c" fill-opacity="0.6"/><rect x="444.66" y="60.36" width="0.60" height="0.85" fill="#2c2c2c" fill-opacity="0.6"/><rect x="437.42" y="61.57" width="0.60" height="0.85" fill="#2c2c2c" fill-opacity="0.6"/><rect x="438.02" y="61.57" width="0.60" height="0.85" fill="#2c2c2c" fill-opacity="0.6"/><rect x="438.62" y="61.57" width="0.60" height="0.85" fill="#2c2c2c" fill-opacity="0.6"/><rect x="439.23" y="61.57" width="0.60" height="0.85" fill="#2c2c2c" fill-opacity="0.6"/><rect x="439.83" y="61.57" width="0.60" height="0.85" fill="#2c2c2c" fill-opacity="0.6"/><rect x="440.44" y="61.57" width="0.60" height="0.85" fill="#2c2c2c" fill-opacity="0.6"/><rect x="441.04" y="61.57" width="0.60" height="0.85" fill="#2c2c2c" fill-opacity="0.6"/><rect x="441.64" y="61.57" width="0.60" height="0.85" fill="#2c2c2c" fill-opacity="0.6"/><rect x="442.25" y="61.57" width="0.60" height="0.85" fill="#2c2c2c" fill-opacity="0.6"/><rect x="442.85" y="61.57" width="0.60" height="0.85" fill="#2c2c2c" fill-opacity="0.6"/><rect x="443.46" y="61.57" width="0.60" height="0.85" fill="#2c2c2c" fill-opacity="0.6"/><rect x="444.66" y="61.57" width="0.60" height="0.85" fill="#2c2c2c" fill-opacity="0.6"/><rect x="445.87" y="61.57" width="0.60" height="0.85" fill="#0000ff" fill-opacity="0.6"/><rect x="446.48" y="61.57" width="0.60" height="0.85" fill="#0000ff" fill-opacity="0.6"/><rect x="447.08" y="61.57" width="0.60" height="0.85" fill="#0000ff" fill-opacity="0.6"/><rect x="447.68" y="61.57" width="0.60" height="0.85" fill="#0000ff" fill-opacity="0.6"/><rect x="448.29" y="61.57" width="0.60" height="0.85" fill="#0000ff" fill-opacity="0.6"/><rect x="436.21" y="62.77" width="0.60" height="0.85" fill="#0000ff" fill-opacity="0.6"/><rect x="436.81" y="62.77" width="0.60" height="0.85" fill="#0000ff" fill-opacity="0.6"/><rect x="437.42" y="62.77" width="0.60" height="0.85" fill="#0000ff" fill-opacity="0.6"/><rect x="438.02" y="62.77" width="0.60" height="0.85" fill="#0000ff" fill-opacity="0.6"/><rect x="438.62" y="62.77" width="0.60" height="0.85" fill="#2c2c2c" fill-opacity="0.6"/><rect x="437.42" y="63.98" width="0.60" height="0.85" fill="#2c2c2c" fill-opacity="0.6"/><rect x="438.02" y="63.98" width="0.60" height="0.85" fill="#2c2c2c" fill-opacity="0.6"/><rect x="438.62" y="63.98" width="0.60" height="0.85" fill="#2c2c2c" fill-opacity="0.6"/><rect x="439.23" y="63.98" width="0.60" height="0.85" fill="#2c2c2c" fill-opacity="0.6"/><rect x="439.83" y="63.98" width="0.60" height="0.85" fill="#2c2c2c" fill-opacity="0.6"/><rect x="440.44" y="63.98" width="0.60" height="0.85" fill="#2c2c2c" fill-opacity="0.6"/><rect x="441.04" y="63.98" width="0.60" height="0.85" fill="#2c2c2c" fill-opacity="0.6"/><rect x="441.64" y="63.98" width="0.60" height="0.85" fill="#2c2c2c" fill-opacity="0.6"/><rect x="442.25" y="63.98" width="0.60" height="0.85" fill="#2c2c2c" fill-opacity="0.6"/><rect x="442.85" y="63.98" width="0.60" height="0.85" fill="#2c2c2c" fill-opacity="0.6"/><rect x="443.46" y="63.98" width="0.60" height="0.85" fill="#2c2c2c" fill-opacity="0.6"/><rect x="444.06" y="63.98" width="0.60" height="0.85" fill="#2c2c2c" fill-opacity="0.6"/><rect x="444.66" y="63.98" width="0.60" height="0.85" fill="#2c2c2c" fill-opacity="0.6"/><rect x="445.27" y="63.98" width="0.60" height="0.85" fill="#2c2c2c" fill-opacity="0.6"/><rect x="445.87" y="63.98" width="0.60" height="0.85" fill="#2c2c2c" fill-opacity="0.6"/><rect x="446.48" y="63.98" width="0.60" height="0.85" fill="#2c2c2c" fill-opacity="0.6"/><rect x="447.08" y="63.98" width="0.60" height="0.85" fill="#a31515" fill-opacity="0.6"/><rect x="447.68" y="63.98" width="0.60" height="0.85" fill="#a31515" fill-opacity="0.6"/><rect x="448.29" y="63.98" width="0.60" height="0.85" fill="#a31515" fill-opacity="0.6"/><rect x="448.89" y="63.98" width="0.60" height="0.85" fill="#a31515" fill-opacity="0.6"/><rect x="449.50" y="63.98" width="0.60" height="0.85" fill="#2c2c2c" fill-opacity="0.6"/><rect x="436.21" y="65.19" width="0.60" height="0.85" fill="#2c2c2c" fill-opacity="0.6"/><rect x="436.81" y="65.19" width="0.60" height="0.85" fill="#2c2c2c" fill-opacity="0.6"/><rect x="437.42" y="65.19" width="0.60" height="0.85" fill="#2c2c2c" fill-opacity="0.6"/><rect x="438.02" y="65.19" width="0.60" height="0.85" fill="#2c2c2c" fill-opacity="0.6"/><rect x="438.62" y="65.19" width="0.60" height="0.85" fill="#2c2c2c" fill-opacity="0.6"/><rect x="439.23" y="65.19" width="0.60" height="0.85" fill="#2c2c2c" fill-opacity="0.6"/><rect x="439.83" y="65.19" width="0.60" height="0.85" fill="#2c2c2c" fill-opacity="0.6"/><rect x="440.44" y="65.19" width="0.60" height="0.85" fill="#2c2c2c" fill-opacity="0.6"/><rect x="441.04" y="65.19" width="0.60" height="0.85" fill="#2c2c2c" fill-opacity="0.6"/><rect x="441.64" y="65.19" width="0.60" height="0.85" fill="#2c2c2c" fill-opacity="0.6"/><rect x="442.25" y="65.19" width="0.60" height="0.85" fill="#2c2c2c" fill-opacity="0.6"/><rect x="442.85" y="65.19" width="0.60" height="0.85" fill="#2c2c2c" fill-opacity="0.6"/><rect x="443.46" y="65.19" width="0.60" height="0.85" fill="#2c2c2c" fill-opacity="0.6"/><rect x="444.06" y="65.19" width="0.60" height="0.85" fill="#2c2c2c" fill-opacity="0.6"/><rect x="444.66" y="65.19" width="0.60" height="0.85" fill="#2c2c2c" fill-opacity="0.6"/><rect x="445.87" y="65.19" width="0.60" height="0.85" fill="#2c2c2c" fill-opacity="0.6"/><rect x="446.48" y="65.19" width="0.60" height="0.85" fill="#2c2c2c" fill-opacity="0.6"/><rect x="447.08" y="65.19" width="0.60" height="0.85" fill="#2c2c2c" fill-opacity="0.6"/><rect x="447.68" y="65.19" width="0.60" height="0.85" fill="#2c2c2c" fill-opacity="0.6"/><rect x="448.29" y="65.19" width="0.60" height="0.85" fill="#2c2c2c" fill-opacity="0.6"/><rect x="448.89" y="65.19" width="0.60" height="0.85" fill="#2c2c2c" fill-opacity="0.6"/><rect x="449.50" y="65.19" width="0.60" height="0.85" fill="#2c2c2c" fill-opacity="0.6"/><rect x="450.10" y="65.19" width="0.60" height="0.85" fill="#2c2c2c" fill-opacity="0.6"/><rect x="450.70" y="65.19" width="0.60" height="0.85" fill="#2c2c2c" fill-opacity="0.6"/><rect x="451.31" y="65.19" width="0.60" height="0.85" fill="#2c2c2c" fill-opacity="0.6"/><rect x="435.00" y="67.61" width="0.60" height="0.85" fill="#2c2c2c" fill-opacity="0.6"/><rect x="435.60" y="67.61" width="0.60" height="0.85" fill="#2c2c2c" fill-opacity="0.6"/><rect x="436.21" y="67.61" width="0.60" height="0.85" fill="#2c2c2c" fill-opacity="0.6"/><rect x="436.81" y="67.61" width="0.60" height="0.85" fill="#2c2c2c" fill-opacity="0.6"/><rect x="437.42" y="67.61" width="0.60" height="0.85" fill="#2c2c2c" fill-opacity="0.6"/><rect x="438.02" y="67.61" width="0.60" height="0.85" fill="#2c2c2c" fill-opacity="0.6"/><rect x="438.62" y="67.61" width="0.60" height="0.85" fill="#2c2c2c" fill-opacity="0.6"/><rect x="439.23" y="67.61" width="0.60" height="0.85" fill="#2c2c2c" fill-opacity="0.6"/><rect x="439.83" y="67.61" width="0.60" height="0.85" fill="#2c2c2c" fill-opacity="0.6"/><rect x="440.44" y="67.61" width="0.60" height="0.85" fill="#2c2c2c" fill-opacity="0.6"/><rect x="441.04" y="67.61" width="0.60" height="0.85" fill="#2c2c2c" fill-opacity="0.6"/><rect x="441.64" y="67.61" width="0.60" height="0.85" fill="#2c2c2c" fill-opacity="0.6"/><rect x="442.25" y="67.61" width="0.60" height="0.85" fill="#2c2c2c" fill-opacity="0.6"/><rect x="442.85" y="67.61" width="0.60" height="0.85" fill="#2c2c2c" fill-opacity="0.6"/><rect x="443.46" y="67.61" width="0.60" height="0.85" fill="#2c2c2c" fill-opacity="0.6"/><rect x="444.06" y="67.61" width="0.60" height="0.85" fill="#2c2c2c" fill-opacity="0.6"/><rect x="444.66" y="67.61" width="0.60" height="0.85" fill="#2c2c2c" fill-opacity="0.6"/><rect x="435.00" y="70.02" width="0.60" height="0.85" fill="#0000ff" fill-opacity="0.6"/><rect x="435.60" y="70.02" width="0.60" height="0.85" fill="#0000ff" fill-opacity="0.6"/><rect x="436.21" y="70.02" width="0.60" height="0.85" fill="#0000ff" fill-opacity="0.6"/><rect x="436.81" y="70.02" width="0.60" height="0.85" fill="#0000ff" fill-opacity="0.6"/><rect x="438.02" y="70.02" width="0.60" height="0.85" fill="#2c2c2c" fill-opacity="0.6"/><rect x="438.62" y="70.02" width="0.60" height="0.85" fill="#2c2c2c" fill-opacity="0.6"/><rect x="439.23" y="70.02" width="0.60" height="0.85" fill="#2c2c2c" fill-opacity="0.6"/><rect x="439.83" y="70.02" width="0.60" height="0.85" fill="#2c2c2c" fill-opacity="0.6"/><rect x="440.44" y="70.02" width="0.60" height="0.85" fill="#2c2c2c" fill-opacity="0.6"/><rect x="441.04" y="70.02" width="0.60" height="0.85" fill="#2c2c2c" fill-opacity="0.6"/><rect x="441.64" y="70.02" width="0.60" height="0.85" fill="#2c2c2c" fill-opacity="0.6"/><rect x="442.25" y="70.02" width="0.60" height="0.85" fill="#2c2c2c" fill-opacity="0.6"/><rect x="442.85" y="70.02" width="0.60" height="0.85" fill="#2c2c2c" fill-opacity="0.6"/><rect x="443.46" y="70.02" width="0.60" height="0.85" fill="#2c2c2c" fill-opacity="0.6"/><rect x="444.06" y="70.02" width="0.60" height="0.85" fill="#2c2c2c" fill-opacity="0.6"/><rect x="444.66" y="70.02" width="0.60" height="0.85" fill="#2c2c2c" fill-opacity="0.6"/><rect x="445.27" y="70.02" width="0.60" height="0.85" fill="#2c2c2c" fill-opacity="0.6"/><rect x="445.87" y="70.02" width="0.60" height="0.85" fill="#2c2c2c" fill-opacity="0.6"/><rect x="447.08" y="70.02" width="0.60" height="0.85" fill="#a31515" fill-opacity="0.6"/><rect x="447.68" y="70.02" width="0.60" height="0.85" fill="#a31515" fill-opacity="0.6"/><rect x="448.29" y="70.02" width="0.60" height="0.85" fill="#a31515" fill-opacity="0.6"/><rect x="448.89" y="70.02" width="0.60" height="0.85" fill="#2c2c2c" fill-opacity="0.6"/><rect x="436.21" y="71.23" width="0.60" height="0.85" fill="#0000ff" fill-opacity="0.6"/><rect x="436.81" y="71.23" width="0.60" height="0.85" fill="#0000ff" fill-opacity="0.6"/><rect x="437.42" y="71.23" width="0.60" height="0.85" fill="#0000ff" fill-opacity="0.6"/><rect x="438.02" y="71.23" width="0.60" height="0.85" fill="#0000ff" fill-opacity="0.6"/><rect x="438.62" y="71.23" width="0.60" height="0.85" fill="#0000ff" fill-opacity="0.6"/><rect x="439.23" y="71.23" width="0.60" height="0.85" fill="#2c2c2c" fill-opacity="0.6"/><rect x="439.83" y="71.23" width="0.60" height="0.85" fill="#2c2c2c" fill-opacity="0.6"/><rect x="440.44" y="71.23" width="0.60" height="0.85" fill="#2c2c2c" fill-opacity="0.6"/><rect x="441.04" y="71.23" width="0.60" height="0.85" fill="#2c2c2c" fill-opacity="0.6"/><rect x="441.64" y="71.23" width="0.60" height="0.85" fill="#2c2c2c" fill-opacity="0.6"/><rect x="442.25" y="71.23" width="0.60" height="0.85" fill="#2c2c2c" fill-opacity="0.6"/><rect x="442.85" y="71.23" width="0.60" height="0.85" fill="#2c2c2c" fill-opacity="0.6"/><rect x="443.46" y="71.23" width="0.60" height="0.85" fill="#2c2c2c" fill-opacity="0.6"/><rect x="444.06" y="71.23" width="0.60" height="0.85" fill="#2c2c2c" fill-opacity="0.6"/><rect x="444.66" y="71.23" width="0.60" height="0.85" fill="#2c2c2c" fill-opacity="0.6"/><rect x="435.00" y="72.44" width="0.60" height="0.85" fill="#2c2c2c" fill-opacity="0.6"/><rect x="435.60" y="72.44" width="0.60" height="0.85" fill="#2c2c2c" fill-opacity="0.6"/><rect x="436.21" y="72.44" width="0.60" height="0.85" fill="#2c2c2c" fill-opacity="0.6"/><rect x="436.81" y="72.44" width="0.60" height="0.85" fill="#2c2c2c" fill-opacity="0.6"/><rect x="437.42" y="72.44" width="0.60" height="0.85" fill="#2c2c2c" fill-opacity="0.6"/><rect x="438.02" y="72.44" width="0.60" height="0.85" fill="#2c2c2c" fill-opacity="0.6"/><rect x="438.62" y="72.44" width="0.60" height="0.85" fill="#2c2c2c" fill-opacity="0.6"/><rect x="439.23" y="72.44" width="0.60" height="0.85" fill="#2c2c2c" fill-opacity="0.6"/><rect x="439.83" y="72.44" width="0.60" height="0.85" fill="#2c2c2c" fill-opacity="0.6"/><rect x="440.44" y="72.44" width="0.60" height="0.85" fill="#2c2c2c" fill-opacity="0.6"/><rect x="441.04" y="72.44" width="0.60" height="0.85" fill="#2c2c2c" fill-opacity="0.6"/><rect x="441.64" y="72.44" width="0.60" height="0.85" fill="#2c2c2c" fill-opacity="0.6"/><rect x="442.25" y="72.44" width="0.60" height="0.85" fill="#2c2c2c" fill-opacity="0.6"/><rect x="442.85" y="72.44" width="0.60" height="0.85" fill="#2c2c2c" fill-opacity="0.6"/><rect x="443.46" y="72.44" width="0.60" height="0.85" fill="#2c2c2c" fill-opacity="0.6"/><rect x="444.06" y="72.44" width="0.60" height="0.85" fill="#2c2c2c" fill-opacity="0.6"/><rect x="444.66" y="72.44" width="0.60" height="0.85" fill="#2c2c2c" fill-opacity="0.6"/>
    <rect x="435" y="50.54" width="50" height="0.6" fill="#b5d5fb"/>
  </svg>
  <div class="abs" style="left:0;top:28.8px;width:432px;height:2.4px;background:linear-gradient(rgba(0,0,0,0.08),rgba(0,0,0,0.01))"></div>
  <div class="abs" style="left:485.5px;top:28.8px;width:8.5px;height:345.2px;background:#fff;border-left:0.6px solid #ececec"></div>
  <div class="abs" style="left:485.5px;top:56px;width:8.5px;height:262px;background:#c1c1c1;border-left:0.6px solid #b5b5b5"></div>
  <div class="abs" style="left:486.1px;top:190px;width:7.7px;height:1.1px;background:#555"></div>
</div>
<div class="abs" style="left:0;top:373.5px;width:494px;height:0.7px;background:#e0e0e0"></div>

<!-- console -->
<div class="abs" style="left:3px;top:379.7px;font-family:'Liberation Mono',monospace;font-size:8.4px;line-height:13.8px;color:#111;white-space:pre;-webkit-text-stroke:0.15px #111">******************************
*         Jack Smith         *
******************************</div>

<div id="header">
  <svg class="abs" style="left:0;top:0" width="45" height="28" viewBox="0 0 45 28">
    <path d="M13.9 16 L14.1 21.2 C14.3 23.4 16 24.1 19.5 24.2 L24.5 24.2 C26.5 24.1 27.8 23.4 29.2 22.1 L36.9 14.8 C37.9 13.9 38.3 13 38.3 11.8 L38.2 5.8 Z" fill="#d3d9e4"/>
    <path d="M25 2.4 C27 1.8 33.5 1.7 36 2.2 C38.3 2.7 38.9 5.3 37.5 7 L30 14.6 C28 16.6 24.5 17.8 20 17.9 C16.2 18 13.7 17.4 13.9 15.3 C14.1 13.2 16.5 11.6 19 10 C21.6 8.4 22.6 7.3 23.3 5.3 C23.7 4 24 2.8 25 2.4 Z" fill="#a9b3c5"/>
    <path d="M13.9 15.6 C14.4 17.7 17.5 18.1 20 18 C24.5 17.9 28 16.6 30 14.6 L37.6 7" fill="none" stroke="#c3cad7" stroke-width="0.6"/>
    <path d="M25.2 4.5 L27.2 4.5 C28 4.5 28.5 5 28.5 5.8 L28.5 8.3 C28.5 9 28 9.5 27.3 9.5 L25.6 9.5 C25 9.5 24.6 9.9 24.6 10.5 L24.6 11.7 L23 11.7 C22.2 11.7 21.7 11.1 21.7 10.2 L21.7 8.9 C21.7 8.1 22.2 7.6 23 7.6 L26.3 7.6 L26.3 7.1 L24 7.1 L24 5.8 C24 5 24.5 4.5 25.2 4.5 Z" fill="#3a6fb2"/>
    <path d="M27.3 14.6 L25.3 14.6 C24.5 14.6 24 14.1 24 13.3 L24 10.8 C24 10.1 24.5 9.6 25.2 9.6 L26.9 9.6 C27.5 9.6 27.9 9.2 27.9 8.6 L27.9 7.4 L29.5 7.4 C30.3 7.4 30.8 8 30.8 8.9 L30.8 10.2 C30.8 11 30.3 11.5 29.5 11.5 L26.2 11.5 L26.2 12 L28.5 12 L28.5 13.3 C28.5 14.1 28 14.6 27.3 14.6 Z" fill="#f9d53a"/>
  </svg>
  <div class="abs" id="ce" style="left:47.6px;top:9px;font-size:9.9px;font-weight:bold;color:#0b9193;transform:scaleX(0.9);transform-origin:0 0;white-space:nowrap">Code Editor</div>
  <svg class="abs" style="left:588.3px;top:6px" width="14.5" height="14.5" viewBox="0 0 24 24"><path d="M9 16h6v-6h4l-7-7-7 7h4zm-4 2h14v2H5z" fill="#666"/></svg>
  <svg class="abs" style="left:622.3px;top:6px" width="14.5" height="14.5" viewBox="0 0 24 24"><path d="M19 9h-4V3H9v6H5l7 7 7-7zM5 18v2h14v-2H5z" fill="#666"/></svg>
  <div class="abs" style="left:651.4px;top:1.2px;width:45.4px;height:21.4px;border:0.7px solid #e4e4e4;border-radius:2px;color:#c4c4c4;font-size:8.8px;text-align:center;line-height:20px"><span style="display:inline-block;transform:scaleX(0.87)">RESET</span></div>
  <div class="abs" style="left:706.9px;top:1.2px;width:38.2px;height:21.7px;background:#0b9193;border-radius:2px;box-shadow:0 1px 2px rgba(0,0,0,0.3)"></div>
  <div class="abs" style="left:724.85px;top:7.25px;width:2.3px;height:2.3px;background:#fff"></div>
  <div class="abs" style="left:724.85px;top:10.95px;width:2.3px;height:2.3px;background:#fff"></div>
  <div class="abs" style="left:724.85px;top:14.65px;width:2.3px;height:2.3px;background:#fff"></div>
</div>

<!-- right panel -->
<div class="abs" style="left:494px;top:28.8px;width:0.7px;height:527.2px;background:#e0e0e0"></div>
<div class="abs" style="left:503.5px;top:28.8px;width:245.5px;height:48.3px;background:#fff;border-left:0.6px solid #ececec;box-shadow:0 1px 1px rgba(0,0,0,0.25)"></div>
<div class="abs" style="left:512.8px;top:38.5px;width:74.8px;height:22.5px;background:#dedede;border-radius:2px;box-shadow:0 1px 2px rgba(0,0,0,0.2)"></div>
<div class="abs" style="left:561px;top:38.5px;width:0.7px;height:22.5px;background:#c8c8c8"></div>
<div class="abs" style="left:523px;top:44px;font-size:9px;color:#b0b0b0;transform:scaleX(0.86);transform-origin:0 0">DEBUG</div>
<svg class="abs" style="left:571px;top:47px" width="7" height="5"><path d="M0.5 1h5.9l-2.95 3z" fill="#a0a0a0"/></svg>
<svg class="abs" style="left:720px;top:42px" width="18" height="16">
  <path d="M2.8 2.8v1M2.8 5.5v1M2.8 8.2v1M2.8 10.4v1M2.8 12.8v1" stroke="#8a8a8a" stroke-width="0.9"/>
  <rect x="5" y="2.6" width="1" height="1.2" fill="#777"/><rect x="5" y="12.6" width="1" height="1.2" fill="#777"/>
  <path d="M9.6 2.2h3.5a1.6 1.6 0 0 1 1.6 1.6v8.4a1.6 1.6 0 0 1-1.6 1.6h-3.8a1.6 1.6 0 0 1-1.6-1.6v-7.8a2.2 2.2 0 0 1 1.9-2.2zM11.2 4.6v7.8h1.6v-7.8z" fill="#6c6c6c" fill-rule="evenodd"/>
</svg>

<div class="abs" style="left:503.7px;top:88.1px;font-size:19.3px;font-weight:bold;color:#212121;letter-spacing:-0.55px;white-space:nowrap">Scratch 2</div>
<p class="t" style="top:120.3px">Use the ten scratch pages to try out your own code.</p>
<p class="t" style="top:144.4px">The RESET button will clear out the code.</p>
<p class="t" style="top:168.2px">Use F11 when in the code editor to expand it &amp; the sub-<br>menu HELP option to find out more tips for using the<br>editor.</p>

<div class="abs" style="left:494px;top:348.3px;width:255px;height:0.7px;background:#e0e0e0"></div>
<div class="btn" style="left:498.6px;top:360.4px;width:62.4px;height:22.6px;background:#2e7d32;font-size:8.4px;line-height:22.6px">CONTINUE</div>
<div class="btn" style="left:570.6px;top:360.4px;width:63px;height:22.6px;background:#0b9193;font-size:8.4px;line-height:22.6px">STEP INTO</div>
<div class="btn" style="left:643.3px;top:360.4px;width:41.5px;height:22.6px;background:#d32f2f;font-size:8.4px;line-height:22.6px">STOP</div>

<div class="abs" style="left:494px;top:393.7px;width:255px;height:23.2px;background:#d3d3d3;border-top:1.2px solid #484848;border-bottom:1.2px solid #484848;border-left:1.2px solid #484848"></div>
<div class="abs" style="left:555.3px;top:393.7px;width:1.2px;height:23.2px;background:#3a3a3a"></div>
<div class="hd" style="left:504.4px;top:399.8px">Variable</div>
<div class="hd" style="left:680px;top:399.8px;width:59.4px;text-align:right">Value</div>

<div class="rl" style="top:436.5px"></div>
<div class="rl" style="top:467.8px"></div>
<div class="rl" style="top:487.9px"></div>
<div class="rl" style="top:507.5px"></div>
<div class="rl" style="top:527.4px"></div>
<div class="vt" style="top:421px;letter-spacing:-0.4px">FILENAME</div>
<div class="vv" style="top:421px">badges.txt</div>
<div class="vt" style="top:446.5px">badgeFile</div>
<div class="vv" style="top:441.3px;line-height:11.5px">&lt;_io.TextIOWrapper name='badges.txt'<br>mode='w' encoding='UTF-8'&gt;</div>
<div class="vt" style="top:473px">first_badge</div>
<div class="vv" style="top:473px">False</div>
<div class="vt" style="top:493px">name</div>
<div class="vv" style="top:493px">Julie Bloggs</div>
<div class="vt" style="top:513px">names</div>
<div class="vv" style="top:513px">['Jack Smith', 'Julie Bloggs', 'Mary Wood']</div>

<div class="fab" style="left:651.3px;top:518.8px;width:24.2px;height:24.2px;background:#e0e0e0"></div>
<svg class="abs" style="left:651.3px;top:518.8px" width="24.2" height="24.2" viewBox="0 0 24 24"><path d="M14.1 8.9 L10.7 12 L14.1 15.1" fill="none" stroke="#333" stroke-width="1.35"/></svg>
<div class="fab" style="left:685.2px;top:518.8px;width:24.2px;height:24.2px;background:#e0e0e0"></div>
<svg class="abs" style="left:685.2px;top:518.8px" width="24.2" height="24.2" viewBox="0 0 24 24"><path d="M9.9 8.9 L13.3 12 L9.9 15.1" fill="none" stroke="#333" stroke-width="1.35"/></svg>
<div class="fab" style="left:718.8px;top:518.8px;width:24.2px;height:24.2px;background:#0b9193"></div>
<svg class="abs" style="left:718.8px;top:518.8px" width="24.2" height="24.2" viewBox="0 0 24 24">
<rect x="6.6" y="8.7" width="1.3" height="1.2" fill="#fff"/><rect x="8.9" y="8.7" width="9" height="1.2" fill="#fff"/>
<rect x="6.6" y="11.4" width="1.3" height="1.2" fill="#fff"/><rect x="8.9" y="11.4" width="9" height="1.2" fill="#fff"/>
<rect x="6.6" y="14.1" width="1.3" height="1.2" fill="#fff"/><rect x="8.9" y="14.1" width="9" height="1.2" fill="#fff"/>
</svg>
</body></html>
